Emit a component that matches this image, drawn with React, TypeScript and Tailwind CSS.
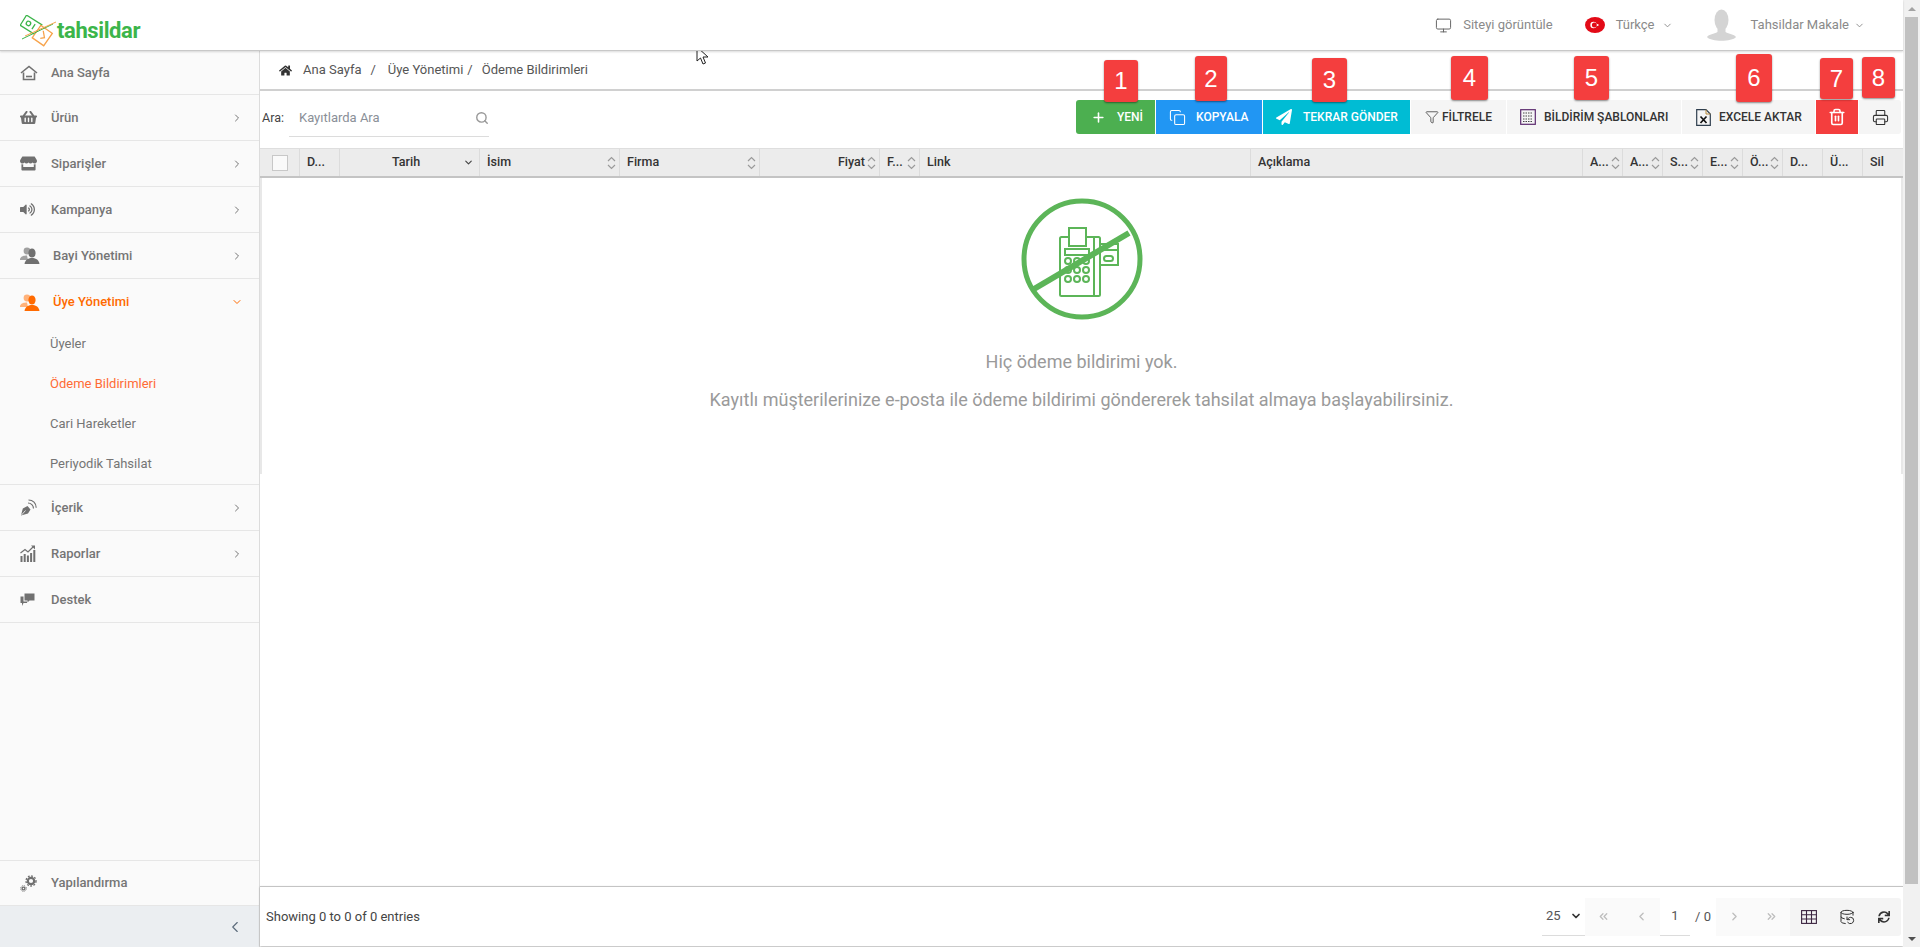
import type { ReactNode } from 'react';
import {
  ChevronRight, ChevronDown, ChevronLeft, ChevronsLeft, ChevronsRight, Plus, Copy, Filter, Trash2, Printer, Search,
  Monitor, DatabaseBackup,
} from 'lucide-react';
import { FaHome, FaShoppingBasket, FaStore, FaVolumeUp, FaPaperPlane, FaSync } from 'react-icons/fa';

function HomeIcon() {
  return (
    <svg width="18" height="16" viewBox="0 0 18 16" fill="none" stroke="#707070" strokeWidth="1.6">
      <path d="M1 8 L9 1.5 L17 8" />
      <path d="M3.5 7.5 V14.5 H14.5 V7.5" />
      <path d="M6 11.5 H12" />
    </svg>
  );
}

function PeopleIcon({ color, back }: { color: string; back: string }) {
  return (
    <svg width="20" height="17" viewBox="0 0 20 17">
      <circle cx="7" cy="4" r="3.4" fill={back} />
      <path d="M0 12 C1 9 4 8.5 7 8.5 L8 13 H0Z" fill={back} />
      <ellipse cx="12" cy="6" rx="3.6" ry="4.6" fill={color} />
      <path d="M4.5 17 C5 12.5 9 11 12 11 C15 11 19 12.5 19.5 17Z" fill={color} />
    </svg>
  );
}

function FeedIcon() {
  return (
    <svg width="17" height="17" viewBox="0 0 17 17" fill="none" stroke="#707070">
      <path d="M1 16.5 L2.8 9.5 L7.5 7 L10.5 10.5 L8 14.5Z" fill="#707070" stroke="none" />
      <path d="M1.5 16 L5.5 11.5" stroke="#fafafa" strokeWidth="0.8" />
      <path d="M8 4 C11 4 13.5 6.5 13.5 9.5" strokeWidth="1.2" />
      <path d="M8.5 1 C13 1 16.2 4.2 16.2 8.7" strokeWidth="1.2" />
    </svg>
  );
}

function ChartIcon() {
  return (
    <svg width="16" height="17" viewBox="0 0 16 17" fill="#707070">
      <rect x="0.5" y="11" width="2" height="6" />
      <rect x="3.7" y="9" width="2" height="8" />
      <rect x="6.9" y="10.5" width="2" height="6.5" />
      <rect x="10.1" y="8" width="2" height="9" />
      <rect x="13.3" y="5" width="2" height="12" />
      <path d="M0.5 8 L5 4.5 L8 7 L13.5 1.5" fill="none" stroke="#707070" strokeWidth="1.2" />
      <path d="M11 0.5 H15 V4.5Z" />
    </svg>
  );
}

function SupportIcon() {
  return (
    <svg width="15" height="14" viewBox="0 0 15 14" fill="#707070">
      <path d="M4.5 0.5 H14.5 V7.5 H9.5 L7.5 9.5 V7.5 H4.5Z" />
      <path d="M0.5 3.5 H3.5 V8.5 H7 V10 H3.5 L2 13 V10 H0.5Z" />
    </svg>
  );
}

function GearsIcon() {
  return (
    <svg width="17" height="17" viewBox="0 0 17 17" fill="none" stroke="#707070">
      <circle cx="11" cy="6" r="3.2" strokeWidth="2.2" />
      <circle cx="11" cy="6" r="5" strokeWidth="1.4" strokeDasharray="1.8 1.5" />
      <circle cx="3.5" cy="13.5" r="1.4" strokeWidth="1.4" />
      <circle cx="3.5" cy="13.5" r="2.8" strokeWidth="1" strokeDasharray="1.2 1" />
    </svg>
  );
}

function Logo() {
  return (
    <svg width="37" height="33" viewBox="0 0 37 33" fill="none">
      <g transform="rotate(32 11 10)" stroke="#3cb54a" strokeWidth="1.3">
        <rect x="2" y="4" width="18" height="12" fill="#fff" />
        <circle cx="8" cy="10" r="2.2" />
        <path d="M14 7 V13" />
      </g>
      <g transform="rotate(-55 22 21)" stroke="#f7a34b" strokeWidth="1.3">
        <rect x="15" y="14" width="15" height="14" fill="#fff" />
        <path d="M19 21 l3 3 l5 -5" />
      </g>
      <path d="M2 24 L33 9" stroke="#3cb54a" strokeWidth="1" />
      <path d="M5 21 L36 7" stroke="#f7a34b" strokeWidth="1" />
    </svg>
  );
}

function Flag() {
  return (
    <svg width="20" height="16" viewBox="0 0 20 16">
      <ellipse cx="10" cy="8" rx="10" ry="8" fill="#e30a17" />
      <circle cx="8.5" cy="8" r="3.2" fill="#fff" />
      <circle cx="9.4" cy="8" r="2.5" fill="#e30a17" />
      <circle cx="12.6" cy="8" r="1" fill="#fff" />
    </svg>
  );
}

function Avatar() {
  return (
    <svg width="29" height="33" viewBox="0 0 29 33">
      <ellipse cx="14.5" cy="11" rx="7" ry="10.5" fill="#d4d4d4" />
      <path d="M10.5 18 H18.5 V23 C22 25 27 25 29 28 C25 33 4 33 0 28 C2 25 7 25 10.5 23Z" fill="#d4d4d4" />
    </svg>
  );
}

function TemplateIcon() {
  return (
    <svg width="16" height="16" viewBox="0 0 16 16" fill="none">
      <rect x="0.7" y="0.7" width="14.6" height="14.6" stroke="#5b2a6e" strokeWidth="1.2" />
      <path d="M3 4 H13 M3 7 H13 M3 10 H13 M3 12.5 H13" stroke="#444" strokeWidth="1" strokeDasharray="1.5 1" />
    </svg>
  );
}

function ExcelIcon() {
  return (
    <svg width="15" height="17" viewBox="0 0 15 17" fill="none">
      <path d="M0.7 0.7 H10 L14.3 5 V16.3 H0.7Z" stroke="#2f3f4f" strokeWidth="1.2" />
      <path d="M10 0.7 V5 H14.3" stroke="#b98a3a" strokeWidth="1" />
      <path d="M4.5 7.5 L10.5 14 M10.5 7.5 L4.5 14" stroke="#111" strokeWidth="1.7" />
    </svg>
  );
}

function TableIcon() {
  return (
    <svg width="16" height="14" viewBox="0 0 16 14" fill="none" stroke="#3b2440" strokeWidth="1.1">
      <rect x="0.6" y="0.6" width="14.8" height="12.8" />
      <path d="M0.6 4.7 H15.4 M0.6 9 H15.4 M5.5 0.6 V13.4 M10.5 0.6 V13.4" />
    </svg>
  );
}

function EmptyIcon() {
  return (
    <svg width="122" height="122" viewBox="0 0 122 122" fill="none" stroke="#5cb558">
      <g strokeWidth="2">
        <rect x="39" y="39" width="40" height="59" rx="1.5" />
        <path d="M48 39 V30 H65 V48 H48Z" fill="#fff" />
        <rect x="44" y="51" width="24" height="6" />
        <path d="M73 39 V98" />
        <circle cx="47" cy="63" r="3" />
        <circle cx="56" cy="63" r="3" />
        <circle cx="65" cy="63" r="3" />
        <circle cx="47" cy="72" r="3" />
        <circle cx="56" cy="72" r="3" />
        <circle cx="65" cy="72" r="3" />
        <circle cx="47" cy="81" r="3" />
        <circle cx="56" cy="81" r="3" />
        <circle cx="65" cy="81" r="3" />
        <path d="M79 46 H97 V67 H79 M79 52 H97" />
        <rect x="83" y="58" width="9" height="5" rx="2.5" />
      </g>
      <circle cx="61" cy="61" r="58" strokeWidth="5" />
      <path d="M13 91 L108 35" strokeWidth="6" />
    </svg>
  );
}

function SortIcon() {
  return (
    <svg width="9" height="14" viewBox="0 0 9 14" fill="none" stroke="#9a9a9a" strokeWidth="1.2" className="shrink-0">
      <path d="M1 5 L4.5 1.5 L8 5" />
      <path d="M1 9 L4.5 12.5 L8 9" />
    </svg>
  );
}

function MenuItem({ icon, label, chevron = true, active = false, shift = false, first = false }: { icon: ReactNode; label: string; chevron?: boolean; active?: boolean; shift?: boolean; first?: boolean }) {
  return (
    <div className={`flex items-center pl-[20px] pr-[16px] ${first ? 'h-[44px]' : 'h-[46px]'} ${active ? '' : 'border-b border-[#e6e6e6]'}`}>
      <div className={`${shift ? 'w-[33px]' : 'w-[31px]'} shrink-0`}>{icon}</div>
      <span className={`flex-1 text-[13px] font-medium ${active ? 'text-[#ff6a00]' : 'text-[#757575]'}`}>{label}</span>
      {chevron && (active
        ? <ChevronDown size={12} strokeWidth={2} className="text-[#ff6a00]" />
        : <ChevronRight size={12} strokeWidth={2} className="text-[#757575]" />)}
    </div>
  );
}

function SubItem({ label, active = false }: { label: string; active?: boolean }) {
  return (
    <div className={`flex h-[40px] items-center pl-[50px] text-[13px] ${active ? 'text-[#ff6b35]' : 'text-[#757575]'}`}>
      {label}
    </div>
  );
}

function Sidebar() {
  return (
    <aside className="flex h-full w-[260px] shrink-0 flex-col border-r border-[#dcdcdc] bg-[#fafafa]">
      <MenuItem icon={<HomeIcon />} label="Ana Sayfa" chevron={false} first />
      <MenuItem icon={<FaShoppingBasket size={17} color="#707070" />} label="Ürün" />
      <MenuItem icon={<FaStore size={17} color="#707070" />} label="Siparişler" />
      <MenuItem icon={<FaVolumeUp size={15} color="#707070" />} label="Kampanya" />
      <MenuItem icon={<PeopleIcon color="#707070" back="#a0a0a0" />} label="Bayi Yönetimi" shift />
      <MenuItem icon={<PeopleIcon color="#ff6a00" back="#ffb27a" />} label="Üye Yönetimi" active shift />
      <div className="mt-[-1px] flex flex-col border-b border-[#e6e6e6]">
        <SubItem label="Üyeler" />
        <SubItem label="Ödeme Bildirimleri" active />
        <SubItem label="Cari Hareketler" />
        <SubItem label="Periyodik Tahsilat" />
      </div>
      <MenuItem icon={<FeedIcon />} label="İçerik" />
      <MenuItem icon={<ChartIcon />} label="Raporlar" />
      <MenuItem icon={<SupportIcon />} label="Destek" chevron={false} />
      <div className="mt-auto flex h-[46px] items-center border-y border-[#e6e6e6] pl-[20px]">
        <div className="w-[31px]"><GearsIcon /></div>
        <span className="text-[13px] font-medium text-[#757575]">Yapılandırma</span>
      </div>
      <div className="flex h-[41px] items-center justify-end bg-[#ebeef1] pr-[15px]">
        <ChevronLeft size={18} strokeWidth={1.5} className="text-[#5a6a7a]" />
      </div>
    </aside>
  );
}

function Badge({ n, className }: { n: number; className: string }) {
  return (
    <span className={`absolute z-10 flex items-center justify-center rounded-[3px] bg-[#f43e3e] font-['Liberation_Sans',sans-serif] text-[24px] font-normal text-white shadow-[0_1px_2px_rgba(0,0,0,0.45)] ${className}`}>
      {n}
    </span>
  );
}

const btnBase = 'relative flex h-[34px] items-center text-[12px] font-medium whitespace-nowrap';

function Toolbar() {
  return (
    <div className="flex h-[57px] items-start pl-[2px] pr-[2px] pt-[9px]">
      <span className="mt-[9px] text-[12.5px] text-[#444]">Ara:</span>
      <div className="ml-[5px] flex h-[37px] w-[200px] items-center justify-between border-b border-[#dcdcdc] pl-[10px]">
        <span className="text-[13px] text-[#8a8f98]">Kayıtlarda Ara</span>
        <Search size={14} strokeWidth={2.4} className="text-[#999]" />
      </div>
      <div className="ml-auto flex gap-[1px]">
        <div className={`${btnBase} w-[79px] rounded-l-[3px] bg-[#4caf50] pl-[15px] font-bold text-white`}>
          <Badge n={1} className="left-[28px] top-[-40px] h-[42px] w-[34px]" />
          <Plus size={15} strokeWidth={2.5} />
          <span className="ml-[11px]">YENİ</span>
        </div>
        <div className={`${btnBase} w-[106px] bg-[#2196f3] pl-[13px] font-bold text-white`}>
          <Badge n={2} className="left-[39px] top-[-44px] h-[45px] w-[32px]" />
          <Copy size={17} strokeWidth={1.5} />
          <span className="ml-[10px]">KOPYALA</span>
        </div>
        <div className={`${btnBase} w-[147px] bg-[#00bcd4] pl-[13px] font-bold text-white`}>
          <Badge n={3} className="left-[49px] top-[-42px] h-[44px] w-[35px]" />
          <FaPaperPlane size={16} />
          <span className="ml-[11px]">TEKRAR GÖNDER</span>
        </div>
        <div className={`${btnBase} w-[95px] bg-[#f5f5f5] pl-[14px] text-[#333]`}>
          <Badge n={4} className="left-[40px] top-[-44px] h-[44px] w-[37px]" />
          <Filter size={14} strokeWidth={1.3} />
          <span className="ml-[3px]">FİLTRELE</span>
        </div>
        <div className={`${btnBase} w-[174px] bg-[#f5f5f5] pl-[13px] text-[#333]`}>
          <Badge n={5} className="left-[67px] top-[-44px] h-[44px] w-[35px]" />
          <TemplateIcon />
          <span className="ml-[8px]">BİLDİRİM ŞABLONLARI</span>
        </div>
        <div className={`${btnBase} w-[133px] bg-[#f5f5f5] pl-[14px] text-[#333]`}>
          <Badge n={6} className="left-[54px] top-[-46px] h-[48px] w-[36px]" />
          <ExcelIcon />
          <span className="ml-[8px]">EXCELE AKTAR</span>
        </div>
        <div className={`${btnBase} w-[42px] justify-center bg-[#f43e3e] text-white`}>
          <Badge n={7} className="left-[4px] top-[-42px] h-[41px] w-[33px]" />
          <Trash2 size={18} strokeWidth={2.2} />
        </div>
        <div className={`${btnBase} w-[42px] justify-center rounded-r-[3px] bg-[#f5f5f5] text-[#333]`}>
          <Badge n={8} className="left-[3px] top-[-43px] h-[41px] w-[33px]" />
          <Printer size={17} strokeWidth={1.5} />
        </div>
      </div>
    </div>
  );
}

const columns = [
  { label: 'D...', w: 40 },
  { label: 'Tarih', w: 140, kind: 'date' },
  { label: 'İsim', w: 140, sort: true },
  { label: 'Firma', w: 140, sort: true },
  { label: 'Fiyat', w: 120, sort: true, right: true },
  { label: 'F...', w: 40, sort: true },
  { label: 'Link', w: 331 },
  { label: 'Açıklama', w: 332 },
  { label: 'A...', w: 40, sort: true },
  { label: 'A...', w: 40, sort: true },
  { label: 'S...', w: 40, sort: true },
  { label: 'E...', w: 40, sort: true },
  { label: 'Ö...', w: 40, sort: true },
  { label: 'D...', w: 40 },
  { label: 'Ü...', w: 40 },
  { label: 'Sil', w: 40 },
];

function TableHead() {
  return (
    <div className="flex h-[30px] border-t border-b-2 border-t-[#dedede] border-b-[#c4c4c4] bg-[#ececec] text-[12.5px] font-medium text-[#333]">
      <div className="flex w-[40px] shrink-0 items-center justify-center border-r border-[#dcdcdc]">
        <span className="h-[16px] w-[16px] border border-[#c8c8c8] bg-[#fafafa]" />
      </div>
      {columns.map((col, i) => (
        <div
          key={i}
          style={{ width: col.w }}
          className="flex shrink-0 items-center gap-[2px] border-r border-[#dcdcdc] pl-[7px] pr-[3px] last:border-r-0"
        >
          {col.kind === 'date' ? (
            <>
              <span className="flex-1 pl-[45px]">{col.label}</span>
              <ChevronDown size={11} strokeWidth={2.5} className="mr-[2px] text-[#444]" />
            </>
          ) : (
            <>
              <span className={`flex-1 ${col.right ? 'text-right' : ''}`}>{col.label}</span>
              {col.sort && <SortIcon />}
            </>
          )}
        </div>
      ))}
    </div>
  );
}

function Footer() {
  return (
    <div className="flex h-[60px] items-center border-t border-[#c4c4c4] pl-[6px] pr-[2px] shadow-[0_1px_2px_rgba(0,0,0,0.3)]">
      <span className="text-[13px] text-[#444]">Showing 0 to 0 of 0 entries</span>
      <div className="ml-auto flex h-[38px] items-stretch text-[#555]">
        <div className="flex w-[43px] items-center gap-[9px] border-b border-[#dcdcdc] pl-[4px] text-[13px]">
          25
          <ChevronDown size={12} strokeWidth={3.5} className="text-[#333]" />
        </div>
        <div className="flex w-[75px] items-center justify-around bg-[#fafafa] text-[#bdbdbd]">
          <ChevronsLeft size={13} strokeWidth={2.4} />
          <ChevronLeft size={13} strokeWidth={2.4} />
        </div>
        <div className="flex w-[30px] items-center justify-center border-b border-[#dcdcdc] text-[13px]">1</div>
        <div className="flex w-[26px] items-center justify-center text-[13px]">/ 0</div>
        <div className="flex w-[74px] items-center justify-around bg-[#fafafa] text-[#bdbdbd]">
          <ChevronRight size={13} strokeWidth={2.4} />
          <ChevronsRight size={13} strokeWidth={2.4} />
        </div>
        <div className="flex w-[111px] items-center justify-around rounded-r-[3px] bg-[#f4f4f4] text-[#333]">
          <TableIcon />
          <DatabaseBackup size={16} strokeWidth={1.5} />
          <FaSync size={12} />
        </div>
      </div>
    </div>
  );
}

function Scrollbar() {
  return (
    <div className="flex h-full w-[17px] shrink-0 flex-col items-center bg-[#f1f1f1]">
      <div className="flex h-[17px] items-center">
        <div className="h-0 w-0 border-x-[4px] border-b-[4px] border-x-transparent border-b-[#a3a3a3]" />
      </div>
      <div className="h-[867px] w-[13px] bg-[#c1c1c1]" />
      <div className="mt-auto flex h-[17px] items-center">
        <div className="h-0 w-0 border-x-[4px] border-t-[4px] border-x-transparent border-t-[#505050]" />
      </div>
    </div>
  );
}

export default function App() {
  return (
    <div className="relative flex h-[947px] w-[1920px] overflow-hidden bg-white font-['Roboto',sans-serif]">
      <div className="flex min-w-0 flex-1 flex-col">
        <header className="z-10 flex h-[51px] shrink-0 items-center border-b border-[#c8c8c8] bg-white pl-[20px] pr-[38px] shadow-[0_1px_2px_rgba(0,0,0,0.15)]">
          <div className="mt-[12px] flex items-center">
            <Logo />
            <span className="ml-[0px] text-[22px] leading-none font-bold tracking-[-0.4px] text-[#3cb54a]">tahsildar</span>
          </div>
          <div className="ml-auto flex items-center text-[13px] text-[#8a8a8a]">
            <Monitor size={17} strokeWidth={1.4} className="text-[#666]" />
            <span className="ml-[11px]">Siteyi görüntüle</span>
            <span className="ml-[32px]"><Flag /></span>
            <span className="ml-[11px]">Türkçe</span>
            <ChevronDown size={11} className="ml-[7px]" />
            <span className="ml-[34px]"><Avatar /></span>
            <span className="ml-[15px]">Tahsildar Makale</span>
            <ChevronDown size={11} className="ml-[5px]" />
          </div>
        </header>
        <div className="flex min-h-0 flex-1">
          <Sidebar />
          <main className="flex min-w-0 flex-1 flex-col">
            <nav className="flex h-[40px] shrink-0 items-center border-b-2 border-[#d0d0d0] pl-[19px] text-[13px] text-[#555]">
              <FaHome size={13} className="text-[#333]" />
              <span className="ml-[11px]">Ana Sayfa</span>
              <span className="ml-[9px]">/</span>
              <span className="ml-[12px]">Üye Yönetimi</span>
              <span className="ml-[4px]">/</span>
              <span className="ml-[9px]">Ödeme Bildirimleri</span>
            </nav>
            <Toolbar />
            <TableHead />
            <div className="flex h-[296px] shrink-0 flex-col items-center border-x-2 border-[#e8e8e8] pt-[20px]">
              <EmptyIcon />
              <p className="mt-[30px] text-[18px] leading-[24px] text-[#9a9a9a]">Hiç ödeme bildirimi yok.</p>
              <p className="mt-[14px] text-[18px] leading-[24px] text-[#9a9a9a]">
                Kayıtlı müşterilerinize e-posta ile ödeme bildirimi göndererek tahsilat almaya başlayabilirsiniz.
              </p>
            </div>
            <div className="flex-1" />
            <Footer />
            <div className="h-[1px]" />
          </main>
        </div>
      </div>
      <Scrollbar />
      <svg className="absolute left-[696px] top-[46px]" width="14" height="20" viewBox="0 0 14 20">
        <path d="M1 1 V15 L4.5 12 L7 18 L9.5 17 L7 11 H12Z" fill="#fff" stroke="#222" strokeWidth="1" />
      </svg>
    </div>
  );
}
